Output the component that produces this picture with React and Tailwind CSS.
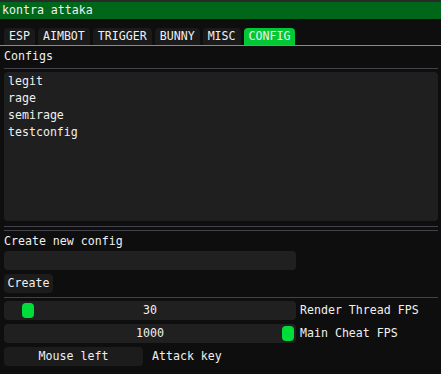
import React from 'react';

const tabs = ['ESP', 'AIMBOT', 'TRIGGER', 'BUNNY', 'MISC', 'CONFIG'];
const configs = ['legit', 'rage', 'semirage', 'testconfig'];

const Slider = ({ value, grabClass, label }) => (
    <div className="flex items-center">
        <div className="relative w-[292px] h-[19px] bg-[#202020] rounded-[4px] flex items-center justify-center">
            <div className={`absolute top-[2px] w-[12px] h-[15px] rounded-[4px] bg-[#00dd3a] ${grabClass}`}></div>
            <span className="relative">{value}</span>
        </div>
        <span className="ml-[4px]">{label}</span>
    </div>
);

const App = () => {
    return (
        <div
            className="w-[441px] h-[374px] bg-[#0e0e0e] text-[#f0f0f0] overflow-hidden text-[11.6px] leading-[13px]"
            style={{ fontFamily: '"DejaVu Sans Mono", "Liberation Mono", monospace' }}
        >
            <div className="h-[2px] bg-[#2a2a2a]"></div>
            <div className="h-[17px] bg-[#00661a] pl-[2px] flex items-center">kontra attaka</div>

            <div className="pl-[4px] pt-[9px] flex gap-[3px]">
                {tabs.map((tab) => (
                    <div
                        key={tab}
                        className={`h-[17px] px-[5px] rounded-t-[4px] flex items-center ${
                            tab === 'CONFIG' ? 'bg-[#02c835]' : 'bg-[#1a1a1a]'
                        }`}
                    >
                        {tab}
                    </div>
                ))}
            </div>
            <div className="h-px bg-[#00e03a]"></div>

            <div className="pl-[4px] pr-[3px]">
                <div className="mt-[4px]">Configs</div>
                <div className="mt-[5px] h-px bg-[#42424b]"></div>

                <div className="mt-[3px] h-[149px] bg-[#1f1f1f] rounded-[4px] pl-[4px] pt-[3px] flex flex-col gap-[4px]">
                    {configs.map((c) => (
                        <div key={c}>{c}</div>
                    ))}
                </div>

                <div className="mt-[5px] h-px bg-[#42424b]"></div>
                <div className="mt-[3px] h-px bg-[#42424b]"></div>

                <div className="mt-[4px]">Create new config</div>
                <div className="mt-[3px] w-[292px] h-[19px] bg-[#202020] rounded-[4px]"></div>

                <div className="mt-[4px] w-[49px] h-[19px] bg-[#1c1c1c] rounded-[4px] flex items-center justify-center">
                    Create
                </div>

                <div className="mt-[4px] h-px bg-[#42424b]"></div>

                <div className="mt-[3px] flex flex-col gap-[4px]">
                    <Slider value="30" grabClass="left-[18px]" label="Render Thread FPS" />
                    <Slider value="1000" grabClass="left-[278px]" label="Main Cheat FPS" />
                    <div className="flex items-center">
                        <div className="w-[139px] h-[19px] bg-[#1c1c1c] rounded-[4px] flex items-center justify-center">
                            Mouse left
                        </div>
                        <span className="ml-[9px]">Attack key</span>
                    </div>
                </div>
            </div>
        </div>
    );
};

export default App;
